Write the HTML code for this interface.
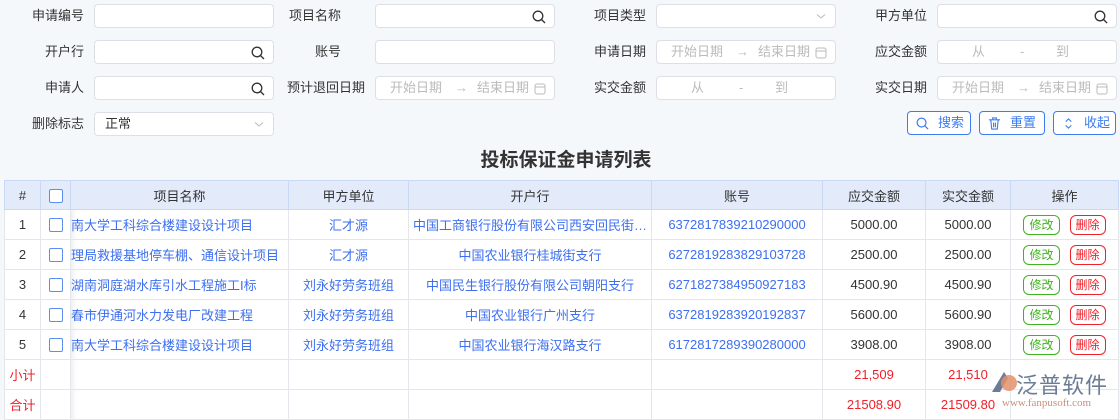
<!DOCTYPE html>
<html><head><meta charset="utf-8"><style>
*{box-sizing:border-box;margin:0;padding:0}
body{width:1120px;height:418px;overflow:hidden;background:#f5f8fb;font-family:"Liberation Sans","Noto Sans CJK SC",sans-serif;font-size:13px;color:#333;position:relative}
.lb{position:absolute;text-align:right;width:120px;height:24px;line-height:24px;color:#333}
.in{position:absolute;height:24px;width:180px;background:#fff;border:1px solid #dcdfe6;border-radius:4px;color:#bbb;line-height:22px}
.in svg{position:absolute;right:8px;top:5px}
.ph{position:absolute;top:0}
.btn{position:absolute;top:111px;height:24px;border:1px solid #3d7cf0;border-radius:4px;color:#3d7cf0;background:#fff;line-height:22px;font-size:13px}
.btn svg{position:absolute;left:8px;top:5px}
.btn span{position:absolute;left:30px}
h1{position:absolute;top:145px;left:0;width:1132px;text-align:center;font-size:19px;font-weight:bold;color:#333}
table{position:absolute;left:4px;top:180px;border-collapse:collapse;table-layout:fixed;width:1114px;background:#fff}
td,th{border:1px solid #e3e6eb;height:30px;text-align:center;white-space:nowrap;overflow:hidden;font-weight:normal}
th{background:#e3ebfa;height:29px;border-color:#c9d9f5;color:#333}
.bl{color:#3d6ff0}
.rd{color:#f0202a}
.cb{display:inline-block;width:14px;height:14px;border:1px solid #5b8ef0;border-radius:2px;vertical-align:middle;background:#fff}
.nm{text-align:left;padding-left:0;box-shadow:inset 6px 0 6px -4px rgba(0,0,0,.08)}
.bm{display:inline-block;height:20px;line-height:18px;padding:0 5px;border-radius:6px;font-size:12px;border:1px solid}
.g{color:#3fb320;border-color:#3fb320;margin-right:10px}
.r{color:#f0202a;border-color:#f0202a}
</style></head><body>
<div class="lb" style="left:-36px;top:4px">申请编号</div><div class="in" style="left:94px;top:4px"></div>
<div class="lb" style="left:221px;top:4px">项目名称</div><div class="in" style="left:375px;top:4px"><svg width="14" height="14" viewBox="0 0 14 14"><circle cx="6" cy="6" r="4.8" fill="none" stroke="#333" stroke-width="1.3"/><path d="M9.5 9.5L13 13" stroke="#333" stroke-width="1.3"/></svg></div>
<div class="lb" style="left:526px;top:4px">项目类型</div><div class="in" style="left:656px;top:4px"><svg width="12" height="12" viewBox="0 0 12 12"><path d="M2 4.5L6 8L10 4.5" fill="none" stroke="#bbb"/></svg></div>
<div class="lb" style="left:807px;top:4px">甲方单位</div><div class="in" style="left:937px;top:4px"><svg width="14" height="14" viewBox="0 0 14 14"><circle cx="6" cy="6" r="4.8" fill="none" stroke="#333" stroke-width="1.3"/><path d="M9.5 9.5L13 13" stroke="#333" stroke-width="1.3"/></svg></div>

<div class="lb" style="left:-36px;top:40px">开户行</div><div class="in" style="left:94px;top:40px"><svg width="14" height="14" viewBox="0 0 14 14"><circle cx="6" cy="6" r="4.8" fill="none" stroke="#333" stroke-width="1.3"/><path d="M9.5 9.5L13 13" stroke="#333" stroke-width="1.3"/></svg></div>
<div class="lb" style="left:221px;top:40px">账号</div><div class="in" style="left:375px;top:40px"></div>
<div class="lb" style="left:526px;top:40px">申请日期</div><div class="in" style="left:656px;top:40px"><span class="ph" style="left:14px">开始日期</span><span class="ph" style="left:79px">→</span><span class="ph" style="left:101px">结束日期</span><svg width="12" height="12" viewBox="0 0 12 12" style="top:6px"><rect x="1" y="1" width="10" height="10" rx="2" fill="none" stroke="#bbb"/><path d="M1 4h10" stroke="#bbb"/></svg></div>
<div class="lb" style="left:807px;top:40px">应交金额</div><div class="in" style="left:937px;top:40px"><span class="ph" style="left:34px">从</span><span class="ph" style="left:82px">-</span><span class="ph" style="left:118px">到</span></div>

<div class="lb" style="left:-36px;top:76px">申请人</div><div class="in" style="left:94px;top:76px"><svg width="14" height="14" viewBox="0 0 14 14"><circle cx="6" cy="6" r="4.8" fill="none" stroke="#333" stroke-width="1.3"/><path d="M9.5 9.5L13 13" stroke="#333" stroke-width="1.3"/></svg></div>
<div class="lb" style="left:245px;top:76px">预计退回日期</div><div class="in" style="left:375px;top:76px"><span class="ph" style="left:14px">开始日期</span><span class="ph" style="left:79px">→</span><span class="ph" style="left:101px">结束日期</span><svg width="12" height="12" viewBox="0 0 12 12" style="top:6px"><rect x="1" y="1" width="10" height="10" rx="2" fill="none" stroke="#bbb"/><path d="M1 4h10" stroke="#bbb"/></svg></div>
<div class="lb" style="left:526px;top:76px">实交金额</div><div class="in" style="left:656px;top:76px"><span class="ph" style="left:34px">从</span><span class="ph" style="left:82px">-</span><span class="ph" style="left:118px">到</span></div>
<div class="lb" style="left:807px;top:76px">实交日期</div><div class="in" style="left:937px;top:76px"><span class="ph" style="left:14px">开始日期</span><span class="ph" style="left:79px">→</span><span class="ph" style="left:101px">结束日期</span><svg width="12" height="12" viewBox="0 0 12 12" style="top:6px"><rect x="1" y="1" width="10" height="10" rx="2" fill="none" stroke="#bbb"/><path d="M1 4h10" stroke="#bbb"/></svg></div>

<div class="lb" style="left:-36px;top:112px">删除标志</div><div class="in" style="left:94px;top:112px;color:#333"><span class="ph" style="left:10px">正常</span><svg width="12" height="12" viewBox="0 0 12 12"><path d="M2 4.5L6 8L10 4.5" fill="none" stroke="#bbb"/></svg></div>

<div class="btn" style="left:907px;width:64px"><svg width="13" height="13" viewBox="0 0 14 14"><circle cx="6" cy="6" r="4.8" fill="none" stroke="#3d7cf0" stroke-width="1.3"/><path d="M9.5 9.5L13 13" stroke="#3d7cf0" stroke-width="1.3"/></svg><span>搜索</span></div>
<div class="btn" style="left:979px;width:66px"><svg width="13" height="13" viewBox="0 0 14 14"><path d="M1 3h12M5 3V1h4v2M3 3l1 10h6l1-10M6 6v5M8 6v5" fill="none" stroke="#3d7cf0" stroke-width="1.2"/></svg><span>重置</span></div>
<div class="btn" style="left:1053px;width:63px"><svg width="13" height="13" viewBox="0 0 14 14"><path d="M4 5l3-3 3 3M4 9l3 3 3-3" fill="none" stroke="#3d7cf0" stroke-width="1.2"/></svg><span>收起</span></div>

<h1>投标保证金申请列表</h1>
<table>
<colgroup><col style="width:36px"><col style="width:30px"><col style="width:218px"><col style="width:120px"><col style="width:243px"><col style="width:171px"><col style="width:103px"><col style="width:85px"><col style="width:108px"></colgroup>
<tr><th>#</th><th><span class="cb"></span></th><th>项目名称</th><th>甲方单位</th><th>开户行</th><th>账号</th><th>应交金额</th><th>实交金额</th><th>操作</th></tr>
<tr><td>1</td><td><span class="cb"></span></td><td class="nm bl">南大学工科综合楼建设设计项目</td><td class="bl">汇才源</td><td class="bl">中国工商银行股份有限公司西安回民街…</td><td class="bl">6372817839210290000</td><td>5000.00</td><td>5000.00</td><td><span class="bm g">修改</span><span class="bm r">删除</span></td></tr>
<tr><td>2</td><td><span class="cb"></span></td><td class="nm bl">理局救援基地停车棚、通信设计项目</td><td class="bl">汇才源</td><td class="bl">中国农业银行桂城街支行</td><td class="bl">6272819283829103728</td><td>2500.00</td><td>2500.00</td><td><span class="bm g">修改</span><span class="bm r">删除</span></td></tr>
<tr><td>3</td><td><span class="cb"></span></td><td class="nm bl">湖南洞庭湖水库引水工程施工I标</td><td class="bl">刘永好劳务班组</td><td class="bl">中国民生银行股份有限公司朝阳支行</td><td class="bl">6271827384950927183</td><td>4500.90</td><td>4500.90</td><td><span class="bm g">修改</span><span class="bm r">删除</span></td></tr>
<tr><td>4</td><td><span class="cb"></span></td><td class="nm bl">春市伊通河水力发电厂改建工程</td><td class="bl">刘永好劳务班组</td><td class="bl">中国农业银行广州支行</td><td class="bl">6372819283920192837</td><td>5600.00</td><td>5600.90</td><td><span class="bm g">修改</span><span class="bm r">删除</span></td></tr>
<tr><td>5</td><td><span class="cb"></span></td><td class="nm bl">南大学工科综合楼建设设计项目</td><td class="bl">刘永好劳务班组</td><td class="bl">中国农业银行海汉路支行</td><td class="bl">6172817289390280000</td><td>3908.00</td><td>3908.00</td><td><span class="bm g">修改</span><span class="bm r">删除</span></td></tr>
<tr><td class="rd">小计</td><td></td><td class="nm"></td><td></td><td></td><td></td><td class="rd">21,509</td><td class="rd">21,510</td><td></td></tr>
<tr><td class="rd">合计</td><td></td><td class="nm"></td><td></td><td></td><td></td><td class="rd">21508.90</td><td class="rd">21509.80</td><td></td></tr>
</table>
<div style="position:absolute;left:990px;top:368px;width:128px;height:50px">
<svg width="30" height="28" viewBox="0 0 30 28" style="position:absolute;left:0;top:2px"><path d="M14 2L2 22h8L18 8z" fill="#6b7c96"/><circle cx="19" cy="13" r="8" fill="#e2906a" opacity=".85"/></svg>
<div style="position:absolute;left:26px;top:0;font-size:22px;color:#6b7c96;letter-spacing:1px">泛普软件</div>
<div style="position:absolute;left:12px;top:29px;font-size:11px;color:#c99080;font-family:'Liberation Serif',serif">www.fanpusoft.com</div>
</div>
</body></html>
